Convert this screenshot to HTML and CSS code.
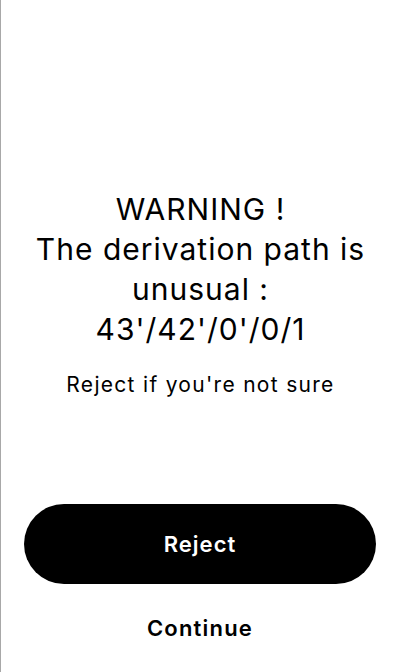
FILE: index.html
```html
<!DOCTYPE html>
<html>
<head>
<meta charset="utf-8">
<link rel="stylesheet" href="styles.css">
</head>
<body>
<div class="screen">
  <div class="content">
    <h1 class="title">WARNING !<br>The derivation path is<br>unusual :<br>43'/42'/0'/0/1</h1>
    <p class="subtitle">Reject if you're not sure</p>
  </div>
  <div class="actions">
    <button class="btn-primary">Reject</button>
    <button class="btn-link">Continue</button>
  </div>
</div>
</body>
</html>
```
FILE: styles.css
```css
* { box-sizing: border-box; }
html, body { margin: 0; padding: 0; background: #fff; }
body { font-family: Inter, "Noto Sans", sans-serif; color: #000; }
.screen {
  width: 400px;
  height: 672px;
  border-left: 1px solid #a8a8a8;
  display: flex;
  flex-direction: column;
}
.content {
  flex: 1;
  display: flex;
  flex-direction: column;
  align-items: center;
  padding-top: 189px;
}
.title {
  margin: 0;
  font-size: 30px;
  line-height: 40px;
  font-weight: 400;
  letter-spacing: 1px;
  text-align: center;
}
.subtitle {
  margin: 22px 0 0;
  font-size: 21px;
  line-height: 28px;
  letter-spacing: 1.3px;
  text-align: center;
}
.actions {
  display: flex;
  flex-direction: column;
  align-items: center;
  padding: 0 24px 24px 23px;
}
.btn-primary {
  width: 100%;
  height: 80px;
  border: none;
  border-radius: 40px;
  background: #000;
  color: #fff;
  font-family: Inter, "Noto Sans", sans-serif;
  font-size: 22px;
  font-weight: 600;
  letter-spacing: 1px;
}
.btn-link {
  margin-top: 24px;
  border: none;
  background: none;
  padding: 0;
  color: #000;
  font-family: Inter, "Noto Sans", sans-serif;
  font-size: 22px;
  font-weight: 600;
  letter-spacing: 1.2px;
  line-height: 40px;
}
```
